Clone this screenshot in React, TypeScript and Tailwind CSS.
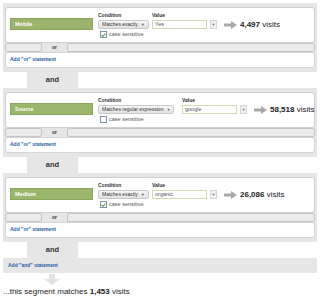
import React from "react";

type Rule = {
    field: string;
    condition: string;
    condWidth: number;
    value: string;
    checked: boolean;
    visits: string;
};

const rules: Rule[] = [
    { field: "Mobile", condition: "Matches exactly", condWidth: 54, value: "Yes", checked: true, visits: "4,497" },
    { field: "Source", condition: "Matches regular expression", condWidth: 84, value: "google", checked: false, visits: "58,518" },
    { field: "Medium", condition: "Matches exactly", condWidth: 54, value: "organic", checked: true, visits: "26,086" },
];

function Checkbox({ checked }: { checked: boolean }) {
    return (
        <span className="w-[7px] h-[7px] flex-none border border-[#7f93ad] bg-white flex items-center justify-center">
            {checked && (
                <svg width="6" height="6" viewBox="0 0 6 6">
                    <path d="M0.8 3.1 L2.4 4.6 L5.3 1.2" stroke="#3f9a2e" strokeWidth="1.3" fill="none" />
                </svg>
            )}
        </span>
    );
}

function GrayArrow() {
    return (
        <svg width="13" height="8" viewBox="0 0 13 8">
            <path d="M0 2.5 H7 V0 L13 4 L7 8 V5.5 H0 Z" fill="#a9a9a9" />
        </svg>
    );
}

function Block({ rule }: { rule: Rule }) {
    return (
        <div className="bg-[#e6e6e6] px-[2px] pt-[4px] pb-[4px]">
            <div className="h-[36px] bg-white border border-[#cfcfcf] rounded-[3px] flex items-start pl-[4px] pt-[4px]">
                <div className="flex-none w-[83px] h-[12px] mt-[6px] bg-[#9bb56c] border border-[#8ba55c] text-white font-bold text-[5.5px] leading-[10px] pl-[4px]">
                    {rule.field}
                </div>
                <div className="ml-[5px] flex-none flex flex-col" style={{ width: rule.condWidth }}>
                    <span className="text-[5px] font-bold text-[#333] leading-[7px] h-[8px]">Condition</span>
                    <div className="self-start h-[9px] px-[3px] border border-[#c9c9c9] rounded-[2px] bg-gradient-to-b from-[#f7f7f7] to-[#e2e2e2] text-[5px] text-[#333] leading-[7px] flex items-center gap-[3px] whitespace-nowrap">
                        {rule.condition}
                        <span className="text-[4px] text-[#666]">▼</span>
                    </div>
                    <div className="flex items-center gap-[2px] mt-[2px] ml-[2px]">
                        <Checkbox checked={rule.checked} />
                        <span className="text-[5.5px] text-[#555] leading-[7px] whitespace-nowrap">case sensitive</span>
                    </div>
                </div>
                <div className="flex-none flex flex-col">
                    <span className="text-[5px] font-bold text-[#333] leading-[7px] h-[8px]">Value</span>
                    <div className="flex items-center">
                        <div className="flex-none w-[55px] h-[9px] border border-[#d3d9ae] text-[5.5px] text-[#555] leading-[7px] pl-[2px]">
                            {rule.value}
                        </div>
                        <div className="flex-none ml-[3px] w-[7px] h-[9px] border border-[#d6d6d6] bg-[#f0f0f0] flex items-center justify-center text-[4px] text-[#777]">
                            ▼
                        </div>
                        <div className="flex-none ml-[7px] flex">
                            <GrayArrow />
                        </div>
                        <span className="flex-none ml-[3px] text-[8px] text-[#222] leading-[9px] whitespace-nowrap">
                            <b>{rule.visits}</b> visits
                        </span>
                    </div>
                </div>
            </div>
            <div className="h-[9px] flex items-stretch">
                <div className="w-[37px] bg-[#ebebeb] border border-[#c5c5c5] rounded-[2px]"></div>
                <div className="w-[25px] text-center text-[5px] font-bold text-[#333] leading-[9px]">or</div>
                <div className="flex-1 bg-[#ebebeb] border border-[#c5c5c5] rounded-[2px]"></div>
            </div>
            <div className="h-[16px] bg-white border border-[#d6d6d6] rounded-[3px] flex items-center pl-[4px]">
                <span className="text-[5px] font-bold text-[#1d5fa6]">Add "or" statement</span>
            </div>
        </div>
    );
}

function AndTab() {
    return (
        <div className="flex">
            <div className="ml-[24px] w-[51px] h-[16px] bg-[#e6e6e6] flex items-center justify-center text-[7.5px] font-bold text-[#333]">
                and
            </div>
        </div>
    );
}

export default function App() {
    return (
        <div className="w-[320px] h-[300px] bg-white pl-[3px] pt-[3px] font-['Liberation_Sans',Arial,sans-serif]">
            <div className="w-[314px]">
                {rules.map((r, i) => (
                    <React.Fragment key={i}>
                        <Block rule={r} />
                        <AndTab />
                    </React.Fragment>
                ))}
                <div className="h-[15px] bg-[#e6e6e6] flex items-center pl-[5px]">
                    <span className="text-[5px] font-bold text-[#1d5fa6]">Add "and" statement</span>
                </div>
                <div className="ml-[41px] mt-[1px] flex">
                    <svg width="16" height="11" viewBox="0 0 16 11">
                        <path d="M5 0 H11 V5 H16 L8 11 L0 5 H5 Z" fill="#e2e2e2" />
                    </svg>
                </div>
                <div className="mt-[1px] text-[8px] text-[#222] leading-[12px]">
                    ...this segment matches <b>1,453</b> visits
                </div>
            </div>
        </div>
    );
}
